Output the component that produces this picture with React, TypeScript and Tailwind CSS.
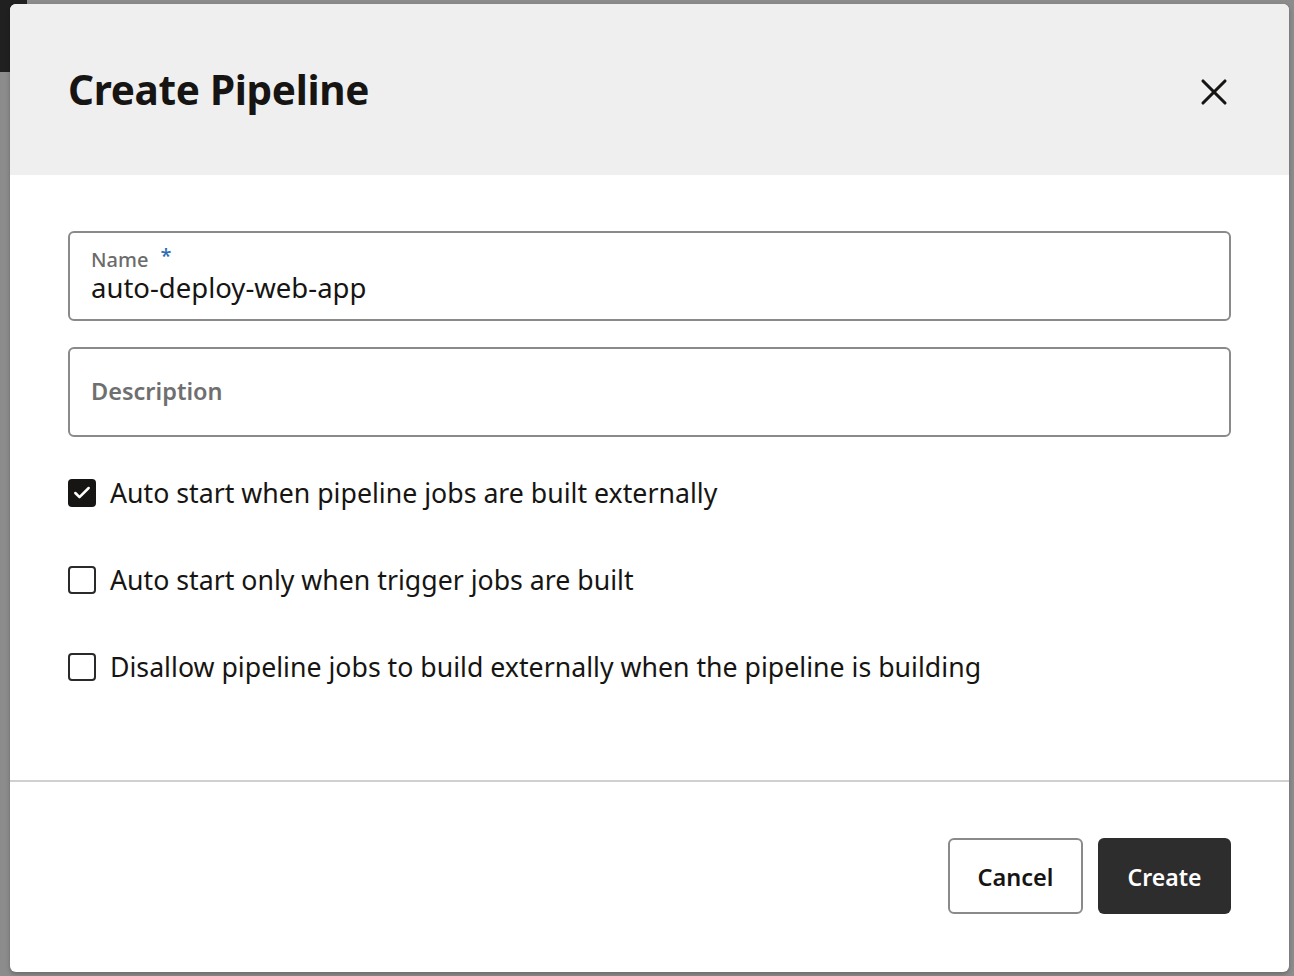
import { X, Check } from 'lucide-react';

const options = [
  { label: 'Auto start when pipeline jobs are built externally', checked: true },
  { label: 'Auto start only when trigger jobs are built', checked: false },
  { label: 'Disallow pipeline jobs to build externally when the pipeline is building', checked: false },
];

export default function App() {
  return (
    <div
      className="relative w-[1294px] h-[976px] bg-[#8c8c8c] overflow-hidden text-[#161513]"
      style={{ fontFamily: '"Noto Sans", "Open Sans", sans-serif' }}
    >
      {/* page behind the scrim */}
      <div className="absolute left-0 top-0 w-[27px] h-[72px] bg-[#202020]" />

      {/* Dialog */}
      <div className="relative ml-[10px] mt-[4px] w-[1279px] h-[968px] bg-white rounded-[6px] shadow-[0_2px_4px_rgba(0,0,0,0.25)] flex flex-col overflow-hidden">
        {/* Header */}
        <div className="h-[171px] bg-[#efefef] flex items-start justify-between pl-[58px] pr-[53px] pt-[59px] shrink-0">
          <h1 className="text-[40.5px] leading-[54px] font-bold tracking-[-0.3px]">Create Pipeline</h1>
          <button className="mt-[7px] text-[#161513]">
            <X className="w-[44px] h-[44px]" strokeWidth={1.7} />
          </button>
        </div>

        {/* Body */}
        <div className="h-[605px] px-[58px] pt-[56px] flex flex-col shrink-0">
          <div className="h-[90px] border-2 border-[#8a8a8a] rounded-[6px] px-[21px] pt-[14px]">
            <div className="flex items-start h-[25px] text-[20px] leading-[25px] text-[#6b6b6b] font-medium">
              <span>Name</span>
              <span className="ml-[12px] text-[#2c6db5] text-[20px] leading-[18px]">*</span>
            </div>
            <div className="text-[27.5px] leading-[32px]">auto-deploy-web-app</div>
          </div>

          <div className="mt-[26px] h-[90px] border-2 border-[#8a8a8a] rounded-[6px] px-[21px] flex items-center">
            <span className="text-[23.5px] font-semibold text-[#6f6f6f]">Description</span>
          </div>

          <div className="mt-[42px] flex flex-col gap-[59px]">
            {options.map((o) => (
              <label key={o.label} className="flex items-center gap-[14px] h-[28px]">
                {o.checked ? (
                  <span className="w-[28px] h-[28px] rounded-[4px] bg-[#161513] flex items-center justify-center">
                    <Check className="w-[20px] h-[20px] text-white" strokeWidth={3} />
                  </span>
                ) : (
                  <span className="w-[28px] h-[28px] rounded-[4px] border-2 border-[#2a2a2a] bg-white" />
                )}
                <span className="text-[26.7px] leading-[34px]">{o.label}</span>
              </label>
            ))}
          </div>
        </div>

        {/* Footer */}
        <div className="border-t-2 border-[#d0d0d0] flex justify-end gap-[15px] px-[58px] pt-[56px]">
          <button className="w-[135px] h-[76px] border-2 border-[#8a8a8a] rounded-[6px] text-[23.5px] font-semibold bg-white pt-[3px]">
            Cancel
          </button>
          <button className="w-[133px] h-[76px] rounded-[6px] bg-[#2d2d2d] text-white text-[23px] font-semibold pt-[3px]">
            Create
          </button>
        </div>
      </div>
    </div>
  );
}
